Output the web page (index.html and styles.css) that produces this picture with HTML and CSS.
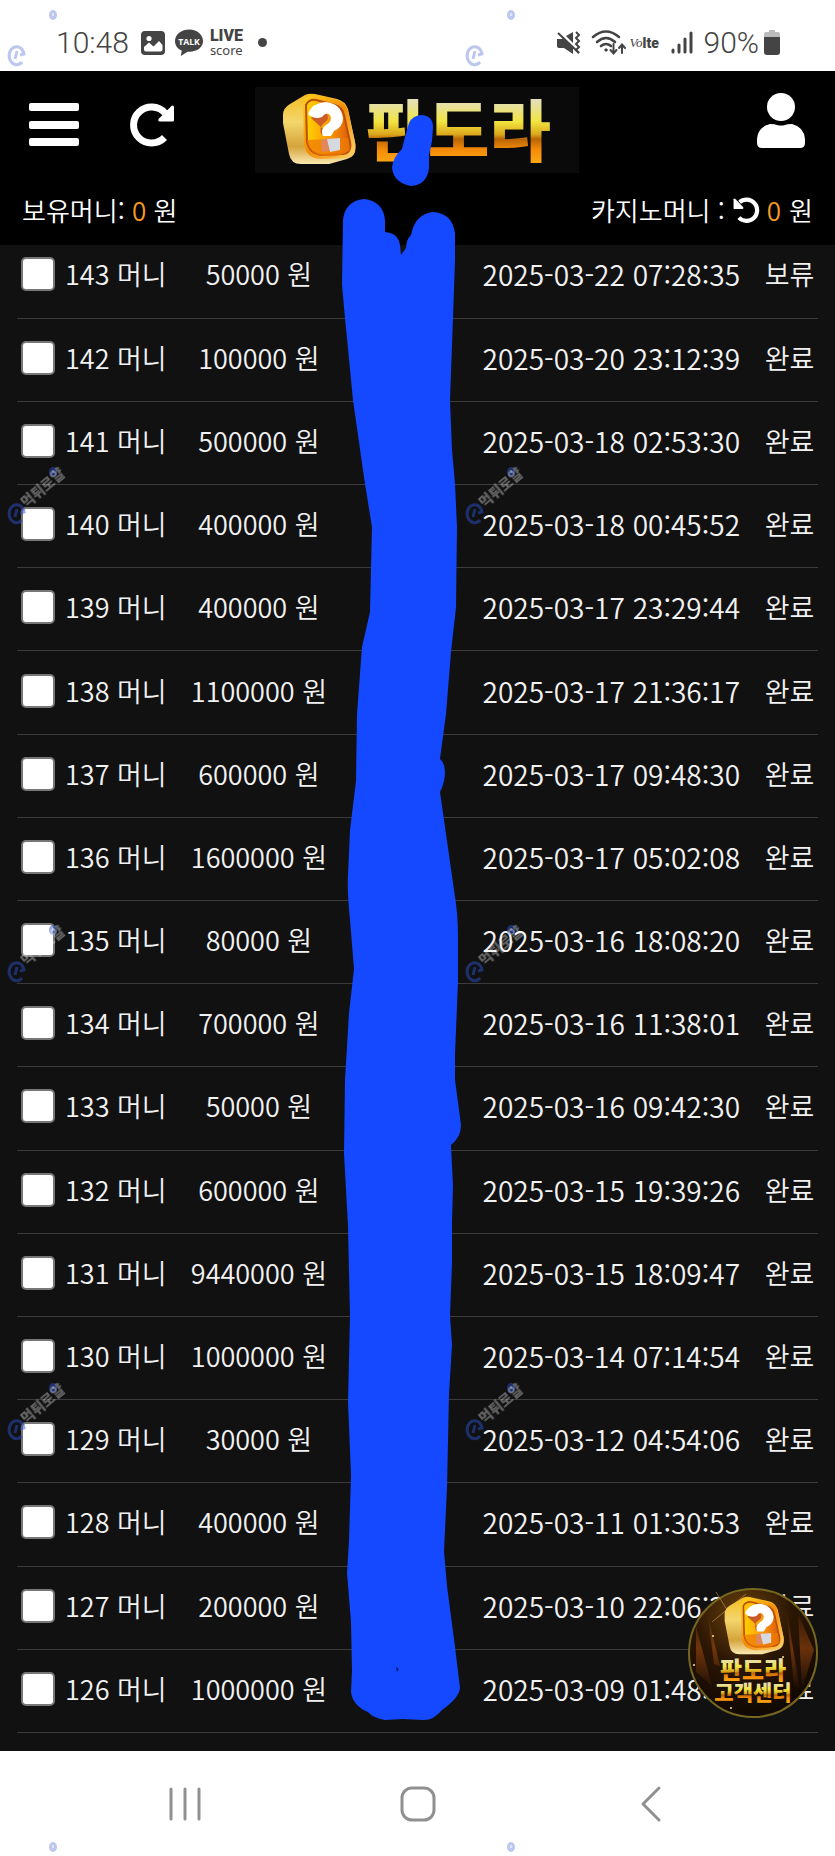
FILE: index.html
```html
<!DOCTYPE html>
<html lang="ko">
<head>
<meta charset="utf-8">
<meta name="viewport" content="width=device-width, initial-scale=1">
<title>판도라</title>
<link rel="stylesheet" href="styles.css">
</head>
<body>
<div class="page">
  <div class="status-bar">
    <div class="status-group">
      <span class="status-text">10:48</span>
      <svg class="ic-image" width="24" height="24" viewBox="0 0 24 24"><rect width="24" height="24" rx="4" fill="#444"/><circle cx="8" cy="7.500" r="2.600" fill="#fff"/><path d="M3 18.500V16l5-4.500 4.500 4L18 10l3.500 4v4.500q0 2-2 2H5q-2 0-2-2z" fill="#fff"/></svg>
      <svg class="ic-talk" width="29" height="28" viewBox="0 0 30 28"><path d="M15 0C6.500 0 0 5 0 12c0 4.500 2.500 8 7 10l-1 5.500 7-4.500h2c8 0 14-4.500 14-11S23 0 15 0z" fill="#444"/><text x="14.500" y="16" text-anchor="middle" class="talk-text">TALK</text></svg>
      <span class="live"><b>LIVE</b><span>score</span></span>
      <span class="more-dot"></span>
    </div>
    <div class="status-group right">
      <svg width="24" height="24" viewBox="0 0 24 24" fill="#444"><path d="M0 8h5l1-1 10 10v6l-9-6H2q-2 0-2-2zM9 5l7-4v11z"/><path d="M1 2l21 20" stroke="#444" stroke-width="2" fill="none"/><path d="M19 1l3 3-3 3 3 3-3 3 3 3-3 3 3 3" stroke="#444" stroke-width="2" fill="none"/></svg>
      <svg class="ic-wifi" width="35" height="26" viewBox="0 0 35 26" fill="none" stroke="#444" stroke-width="2.600" stroke-linecap="round"><path d="M2 7Q15-4 28 7M6 12q9-8 18 0M10 16q5-4 10 0"/><circle cx="15" cy="20" r="1.200" fill="#444" stroke-width="1"/><path d="M22.500 14v9m-3-3l3 3.500 3-3.500M31 23v-8m-3 3l3-3.500 3 3.500" stroke-width="2"/></svg>
      <span class="volte"><i>Vo</i><b>lte</b></span>
      <svg class="ic-signal" width="22" height="23" viewBox="0 0 22 23" stroke="#444" stroke-width="3" stroke-linecap="round"><path d="M2 19v2M8 14v7M14 8v13M20 2v19"/></svg>
      <span class="status-text">90%</span>
      <svg class="ic-battery" width="16" height="25" viewBox="0 0 16 25"><path d="M5 0h6v2h3q2 0 2 2v5H0V4q0-2 2-2h3z" fill="#bbb"/><path d="M0 7h16v15q0 3-3 3H3q-3 0-3-3z" fill="#444"/></svg>
    </div>
  </div>

  <header class="header">
    <div class="header-row">
      <div class="header-actions">
        <button class="icon-button" type="button" aria-label="메뉴"><svg width="50" height="44" viewBox="0 0 50 44" fill="#fff"><rect width="50" height="8" rx="2"/><rect y="18" width="50" height="8" rx="2"/><rect y="35" width="50" height="8" rx="2"/></svg></button>
        <button class="icon-button" type="button" aria-label="새로고침"><svg width="44" height="44" viewBox="0 0 44 44"><path d="M33.500 34.500A18 18 0 1 1 34 10" fill="none" stroke="#fff" stroke-width="7"/><path d="M43 4v13q0 1.500-1.500 1.500H29q-3-.5-1-3L40 3.500q2-2 3 .5z" fill="#fff"/></svg></button>
      </div>
      <a class="logo" href="#" aria-label="판도라">
        <svg width="324" height="86" viewBox="0 0 324 86">
          <defs>
            <linearGradient id="side" x1="0" y1="0" x2="0" y2="1"><stop offset="0" stop-color="#f4bc20"/><stop offset=".4" stop-color="#f3d66d"/><stop offset=".75" stop-color="#d5a43c"/><stop offset="1" stop-color="#fae9b0"/></linearGradient>
            <linearGradient id="face" x1="0" y1="0" x2="1" y2="0"><stop offset="0" stop-color="#ffd200"/><stop offset=".5" stop-color="#fb9c0a"/><stop offset="1" stop-color="#dc5a06"/></linearGradient>
            <linearGradient id="rim" x1="0" y1="0" x2="1" y2="1"><stop offset="0" stop-color="#ffd41c"/><stop offset=".5" stop-color="#f58a08"/><stop offset="1" stop-color="#ffd56a"/></linearGradient>
            <linearGradient id="gold" x1="0" y1="0" x2="0" y2="1"><stop offset="0" stop-color="#e4dfc2"/><stop offset=".25" stop-color="#e6dfb0"/><stop offset=".45" stop-color="#f2e540"/><stop offset=".58" stop-color="#dba81c"/><stop offset=".63" stop-color="#b96505"/><stop offset=".74" stop-color="#f58b09"/><stop offset="1" stop-color="#ffc21c"/></linearGradient>
            <symbol id="cube" viewBox="0 0 76 74">
              <path d="M2 22q0-7 7-11L24 2q4-2 10-1l22 5q8 2 11 10l7 33q3 14-8 17l-18 5H22Q10 72 8 61L2 30z" fill="url(#side)"/>
              <path d="M22 9q4-8 13-7l21 5q8 2 11 11l7 31q2 14-8 16l-26 1Q24 65 23 50z" fill="url(#rim)"/>
              <path d="M25 12q3-6 10-5l19 5q7 2 9 10l6 27q2 11-7 12l-20 1q-14-1-16-14z" fill="url(#face)" stroke="#b94f08" stroke-width="2"/>
              <path d="M26 47l41-2 2 12q-10 8-26 6-15-1-17-16z" fill="#ef7c04" opacity=".75"/>
              <path d="M30 25q10-12 16-4 3 5-3 9-5 4-3 11l10 2z" fill="#c85b26"/>
              <path d="M27 21Q31 10 44 9q16 1 18 16 0 9-9 13l-3 5H42q-3-7 3-11 7-4 4-10-4-4-8 2-8 3-14-3z" fill="#fff"/>
              <path d="M40 47l8-2v13l-7 1z" fill="#e1875d"/><path d="M46 46l13-1v12l-10 2z" fill="#d6dae0"/>
            </symbol>
          </defs>
          <use href="#cube" x="26" y="6" width="76" height="74"/>
          <text x="111" y="69" class="logo-text" fill="url(#gold)">판도라</text>
        </svg>
      </a>
      <button class="icon-button user" type="button" aria-label="내 정보"><svg width="48" height="55" viewBox="0 0 48 55" fill="#fff"><circle cx="24" cy="14" r="14"/><path d="M0 50V46Q1 34 13 31q5 0 7 1 4 1 8 0 2-1 7-1 12 3 13 15v4q0 5-5 5H5q-5 0-5-5z"/></svg></button>
    </div>
    <div class="balance-row">
      <span>보유머니: <span class="amount">0</span> 원</span>
      <span class="casino">카지노머니 : <button class="icon-button" type="button" aria-label="카지노머니 새로고침"><svg width="26" height="26" viewBox="0 0 44 44"><path d="M10 35A18 18 0 1 0 11 9" fill="none" stroke="#fff" stroke-width="7"/><path d="M1 4v15q0 1.500 1.500 1.500H16q3-1 1-3.500L4 3.500q-2-2-3 .5z" fill="#fff"/></svg></button> <span class="amount">0</span> 원</span>
    </div>
  </header>

  <main class="history">
    <table class="history-table">
      <colgroup><col class="c-name"><col class="c-amount"><col class="c-account"><col class="c-date"><col class="c-state"></colgroup>
      <tbody>
        <tr><td><label class="pick"><input type="checkbox">143 머니</label></td><td>50000 원</td><td></td><td class="date">2025-03-22 07:28:35</td><td>보류</td></tr>
        <tr><td><label class="pick"><input type="checkbox">142 머니</label></td><td>100000 원</td><td></td><td class="date">2025-03-20 23:12:39</td><td>완료</td></tr>
        <tr><td><label class="pick"><input type="checkbox">141 머니</label></td><td>500000 원</td><td></td><td class="date">2025-03-18 02:53:30</td><td>완료</td></tr>
        <tr><td><label class="pick"><input type="checkbox">140 머니</label></td><td>400000 원</td><td></td><td class="date">2025-03-18 00:45:52</td><td>완료</td></tr>
        <tr><td><label class="pick"><input type="checkbox">139 머니</label></td><td>400000 원</td><td></td><td class="date">2025-03-17 23:29:44</td><td>완료</td></tr>
        <tr><td><label class="pick"><input type="checkbox">138 머니</label></td><td>1100000 원</td><td></td><td class="date">2025-03-17 21:36:17</td><td>완료</td></tr>
        <tr><td><label class="pick"><input type="checkbox">137 머니</label></td><td>600000 원</td><td></td><td class="date">2025-03-17 09:48:30</td><td>완료</td></tr>
        <tr><td><label class="pick"><input type="checkbox">136 머니</label></td><td>1600000 원</td><td></td><td class="date">2025-03-17 05:02:08</td><td>완료</td></tr>
        <tr><td><label class="pick"><input type="checkbox">135 머니</label></td><td>80000 원</td><td></td><td class="date">2025-03-16 18:08:20</td><td>완료</td></tr>
        <tr><td><label class="pick"><input type="checkbox">134 머니</label></td><td>700000 원</td><td></td><td class="date">2025-03-16 11:38:01</td><td>완료</td></tr>
        <tr><td><label class="pick"><input type="checkbox">133 머니</label></td><td>50000 원</td><td></td><td class="date">2025-03-16 09:42:30</td><td>완료</td></tr>
        <tr><td><label class="pick"><input type="checkbox">132 머니</label></td><td>600000 원</td><td></td><td class="date">2025-03-15 19:39:26</td><td>완료</td></tr>
        <tr><td><label class="pick"><input type="checkbox">131 머니</label></td><td>9440000 원</td><td></td><td class="date">2025-03-15 18:09:47</td><td>완료</td></tr>
        <tr><td><label class="pick"><input type="checkbox">130 머니</label></td><td>1000000 원</td><td></td><td class="date">2025-03-14 07:14:54</td><td>완료</td></tr>
        <tr><td><label class="pick"><input type="checkbox">129 머니</label></td><td>30000 원</td><td></td><td class="date">2025-03-12 04:54:06</td><td>완료</td></tr>
        <tr><td><label class="pick"><input type="checkbox">128 머니</label></td><td>400000 원</td><td></td><td class="date">2025-03-11 01:30:53</td><td>완료</td></tr>
        <tr><td><label class="pick"><input type="checkbox">127 머니</label></td><td>200000 원</td><td></td><td class="date">2025-03-10 22:06:23</td><td>완료</td></tr>
        <tr><td><label class="pick"><input type="checkbox">126 머니</label></td><td>1000000 원</td><td></td><td class="date">2025-03-09 01:48:15</td><td>완료</td></tr>
      </tbody>
    </table>
    <button class="support" type="button" aria-label="판도라 고객센터">
      <svg width="130" height="130" viewBox="0 0 130 130">
        <defs>
          <radialGradient id="glow" cx=".42" cy=".2" r=".85"><stop offset="0" stop-color="#6c430d"/><stop offset=".45" stop-color="#2b1604"/><stop offset="1" stop-color="#0c0602"/></radialGradient>
          <linearGradient id="beam" x1="0" y1="0" x2="0" y2="1"><stop offset="0" stop-color="#a84d12" stop-opacity="0"/><stop offset=".5" stop-color="#a84d12" stop-opacity=".55"/><stop offset="1" stop-color="#a84d12" stop-opacity="0"/></linearGradient>
        </defs>
        <circle cx="65" cy="65" r="64" fill="url(#glow)" stroke="#756720" stroke-width="2"/>
        <path d="M8 38l16 60-16-14zM98 18l14 84-6-4zM110 26l16 36-12 40zM20 28l12 50-6-2z" fill="url(#beam)"/>
        <path d="M24 34L58 6M28 4l16 26" stroke="#e9b267" stroke-width="1" opacity=".5"/>
        <use href="#cube" x="35" y="8" width="62" height="61"/>
        <g fill="#ffe29a"><circle cx="6" cy="77" r="1"/><circle cx="25" cy="48" r="1"/><circle cx="95" cy="69" r="1"/><circle cx="43" cy="120" r="1"/></g>
        <text x="65" y="91" text-anchor="middle" class="support-name" fill="url(#gold)">판도라</text>
        <text x="65" y="112" text-anchor="middle" class="support-label" fill="url(#gold)">고객센터</text>
      </svg>
    </button>
  </main>

  <nav class="nav-bar">
    <button class="icon-button" type="button" aria-label="최근 앱"><svg width="34" height="34" viewBox="0 0 34 34" stroke="#909090" stroke-width="3" stroke-linecap="round"><path d="M3 2v30M17 2v30M31 2v30"/></svg></button>
    <button class="icon-button" type="button" aria-label="홈"><svg width="36" height="36" viewBox="0 0 36 36" fill="none" stroke="#909090" stroke-width="3"><rect x="2" y="2" width="32" height="32" rx="10"/></svg></button>
    <button class="icon-button" type="button" aria-label="뒤로"><svg width="20" height="36" viewBox="0 0 20 36" fill="none" stroke="#909090" stroke-width="3" stroke-linecap="round" stroke-linejoin="round"><path d="M18 2L2 18l16 16"/></svg></button>
  </nav>

  <svg class="overlay" viewBox="0 0 835 1856" aria-hidden="true">
    <defs>
      <g id="ring" stroke="#2c50c8" fill="none"><path d="M22 7A7.500 9 0 1 1 24-1l-4 1" stroke-width="3"/><path d="M17-4l-2 8" stroke-width="3"/></g>
      <g id="spot"><ellipse cx="53" cy="-41" rx="4" ry="5" fill="#2c50c8"/><path d="M53-43v3" stroke="#fff" stroke-width="1"/></g>
    </defs>
    <g fill="#1549ff">
      <path d="M409 123Q413 115 422 115Q433 116 433 127L432 141L429 155V168Q427 185 411 186Q394 183 392 168Q393 157 402 149L405 137Z"/>
      <path d="M343 220Q345 201 364 199Q383 201 385 220V232Q398 233 400 245L401 255L406 248Q406 240 411 235Q415 214 433 212Q452 213 455 233V260L453 318L450 400L452 450L455 484L457 527L456 607L451 652L446 714L440 759Q445 763 445 772Q445 782 440 792L448 848L455 897Q458 915 458 937V982L455 1054V1080L461 1125Q461 1137 451 1145L453 1186L452 1222V1263L450 1316L452 1345L449 1394L447 1488L444 1551L447 1586L455 1647L460 1688Q459 1698 442 1710Q433 1721 422 1720L403 1719L385 1720Q373 1718 368 1712Q353 1706 351 1692L352 1671L351 1622L347 1573L349 1541L351 1475L348 1402L350 1316L348 1226L344 1153L345 1080L349 1013L354 969L350 920Q347 890 348 875L350 830L356 781L357 714L362 647L370 612L372 527L365 484L353 400L345 318L342 285Z"/>
    </g>
    <path d="M396 1667l3 2-2 3z" fill="#0a1d70"/>
    <g opacity=".32"><use href="#ring" y="55"/><use href="#spot" y="56"/><use href="#ring" x="458" y="55"/><use href="#spot" x="458" y="56"/><use href="#spot" y="1888"/><use href="#spot" x="458" y="1888"/></g>
    <g opacity=".5"><use href="#ring" y="513"/><use href="#spot" y="513"/><use href="#ring" x="458" y="513"/><use href="#spot" x="458" y="513"/><use href="#ring" y="971"/><use href="#spot" y="971"/><use href="#ring" x="458" y="971"/><use href="#spot" x="458" y="971"/><use href="#ring" y="1429"/><use href="#spot" y="1429"/><use href="#ring" x="458" y="1429"/><use href="#spot" x="458" y="1429"/></g>
    <g class="mark">
      <text transform="translate(26 508) rotate(-40)">먹튀로얄</text><text transform="translate(484 508) rotate(-40)">먹튀로얄</text>
      <text transform="translate(26 966) rotate(-40)">먹튀로얄</text><text transform="translate(484 966) rotate(-40)">먹튀로얄</text>
      <text transform="translate(26 1424) rotate(-40)">먹튀로얄</text><text transform="translate(484 1424) rotate(-40)">먹튀로얄</text>
    </g>
  </svg>
</div>
</body>
</html>
```
FILE: styles.css
```css
* { box-sizing: border-box; }
body { margin: 0; background: #fff; font-family: "Noto Sans CJK KR", sans-serif; font-weight: 350; }
svg { display: block; flex: none; overflow: visible; }

.page { position: relative; display: flex; flex-direction: column; min-height: 100vh; overflow: hidden; }
.icon-button { display: flex; padding: 0; border: 0; background: none; }

.status-bar { display: flex; justify-content: space-between; align-items: flex-start; height: 71px; padding: 25px 55px 0 56px; color: #444; }
.status-group { display: flex; align-items: center; height: 35px; }
.status-text { font: 300 30px/35px Roboto, sans-serif; }
.ic-image { margin-left: 12px; }
.ic-talk { margin-left: 10px; }
.talk-text { font: 700 9px "Open Sans", sans-serif; fill: #fff; }
.live { display: flex; flex-direction: column; width: 32px; margin-left: 6px; font: 400 13px/13px "Noto Sans", sans-serif; }
.live b { font: 900 16px/16px Roboto, sans-serif; }
.more-dot { width: 9px; height: 9px; margin-left: 16px; border-radius: 50%; background: #444; }
.ic-wifi { margin-left: 10px; }
.volte { display: flex; align-items: center; width: 32px; margin-left: 4px; font: 900 14px/20px Roboto, sans-serif; }
.volte b { font-weight: 900; }
.volte i { font: italic 400 13px/20px "Liberation Serif", serif; }
.ic-signal { margin: 0 11px 0 9px; }
.ic-battery { margin-left: 5px; }

.header { position: relative; z-index: 1; height: 174px; background: #000; color: #fff; }
.header-row { display: grid; grid-template-columns: 1fr auto 1fr; align-items: center; padding: 16px 30px 0 29px; }
.header-actions { display: flex; gap: 52px; align-items: center; padding-bottom: 10px; }
.logo { background: #0a0a0a; }
.logo-text { font: 900 67px "Noto Sans CJK KR", sans-serif; }
.user { justify-self: end; padding-bottom: 20px; }
.balance-row { display: flex; justify-content: space-between; padding: 18px 22px 0; font-size: 26px; line-height: 38px; }
.casino { display: flex; align-items: center; gap: 8px; }
.amount { color: #f79a22; }

.history { position: relative; flex: 1; display: grid; padding: 0 17px 18px; background: #111; }
.history-table { width: 100%; height: calc(100% + 10px); margin-top: -10px; border-collapse: collapse; table-layout: fixed; color: #f2f2f2; font-size: 27px; line-height: 38px; }
.history-table td { height: 83px; padding: 0 0 4px; border-bottom: 1px solid #3c3c3c; text-align: center; white-space: nowrap; }
.history-table .date { font-size: 28px; }
.c-name { width: 19.7%; }
.c-amount { width: 21%; }
.c-account { width: 14.8%; }
.c-date { width: 37.4%; }
.c-state { width: 7.1%; }
.pick { display: flex; align-items: center; gap: 10px; padding-left: 4px; }
.pick input { appearance: none; flex: none; width: 34px; height: 34px; margin: 0; border: 2px solid #777; border-radius: 5px; background: #fff; }

.support { position: absolute; right: 17px; bottom: 33px; padding: 0; border: 0; border-radius: 50%; background: none; }
.support-name { font: 900 24px "Noto Sans CJK KR", sans-serif; }
.support-label { font: 900 21px "Noto Sans CJK KR", sans-serif; }

.nav-bar { display: grid; grid-template-columns: repeat(3, 1fr); place-items: center; height: 105px; padding: 0 68px; background: #fff; }

.overlay { position: absolute; z-index: 2; top: 0; left: 0; width: 100%; pointer-events: none; }
.mark { font: 900 14px "Noto Sans CJK KR", sans-serif; fill: #fff; opacity: .35; }
```
